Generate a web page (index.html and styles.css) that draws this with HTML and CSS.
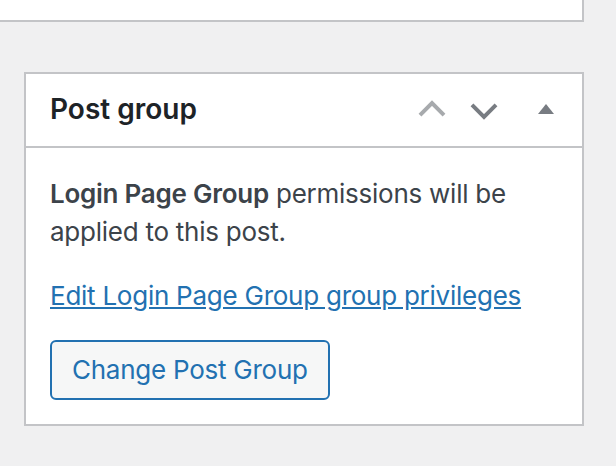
FILE: index.html
```html
<!DOCTYPE html>
<html lang="en">
<head>
<meta charset="utf-8">
<title>Post group</title>
<link rel="stylesheet" href="styles.css">
</head>
<body>
<div class="column">
  <div class="card card-prev"></div>
  <div class="card postbox">
    <div class="postbox-header">
      <h2 class="hndle">Post group</h2>
      <div class="handle-actions">
        <button class="handle-btn order-btn is-disabled" type="button" aria-label="Move up">
          <svg class="icon" viewBox="0 0 20 20" width="40" height="40"><polyline points="4,12.6 10,6.6 16,12.6" fill="none" stroke="currentColor" stroke-width="2"/></svg>
        </button>
        <button class="handle-btn order-btn" type="button" aria-label="Move down">
          <svg class="icon" viewBox="0 0 20 20" width="40" height="40"><polyline points="4,7.4 10,13.4 16,7.4" fill="none" stroke="currentColor" stroke-width="2"/></svg>
        </button>
        <button class="handle-btn toggle-btn" type="button" aria-label="Toggle panel">
          <svg class="icon" viewBox="0 0 20 20" width="40" height="40"><polygon points="6,12 10,7 14,12" fill="currentColor"/></svg>
        </button>
      </div>
    </div>
    <div class="inside">
      <p class="desc"><strong>Login Page Group</strong> permissions will be applied to this post.</p>
      <p class="edit-link"><a href="#">Edit Login Page Group group privileges</a></p>
      <div class="actions">
        <button class="button" type="button">Change Post Group</button>
      </div>
    </div>
  </div>
</div>
</body>
</html>
```

FILE: styles.css
```css
html, body {
  margin: 0;
  padding: 0;
}

body {
  background: #f0f0f1;
  font-family: Inter, "Noto Sans", "Liberation Sans", sans-serif;
  color: #3c434a;
  width: 616px;
  height: 466px;
  overflow: hidden;
}

.column {
  display: flex;
  flex-direction: column;
  padding: 0 32px 0 24px;
}

.card {
  background: #fff;
  border: 2px solid #c3c4c7;
  box-sizing: border-box;
}

.card-prev {
  height: 22px;
  border-top: none;
  margin-left: -40px;
}

.postbox {
  margin-top: 50px;
  height: 354px;
  display: flex;
  flex-direction: column;
}

.postbox-header {
  height: 74px;
  box-sizing: border-box;
  border-bottom: 2px solid #c3c4c7;
  display: flex;
  align-items: center;
  justify-content: space-between;
}

.hndle {
  margin: 0;
  padding-left: 24px;
  font-size: 28px;
  font-weight: 600;
  color: #1d2327;
  line-height: 1.4;
}

.handle-actions {
  display: flex;
  align-self: stretch;
}

.handle-btn {
  border: none;
  background: transparent;
  padding: 0;
  margin: 0;
  display: flex;
  align-items: center;
  justify-content: center;
  color: #787c82;
  cursor: pointer;
}

.order-btn {
  width: 52px;
}

.order-btn.is-disabled {
  color: #a7aaad;
}

.toggle-btn {
  width: 72px;
}

.icon {
  display: block;
}

.inside {
  padding: 0 24px 24px;
  display: flex;
  flex-direction: column;
  align-items: flex-start;
}

.desc {
  margin: 27px 0 0;
  font-size: 26px;
  line-height: 38px;
  letter-spacing: -0.25px;
}

.desc strong {
  font-weight: 600;
}

.edit-link {
  margin: 26px 0 0;
  font-size: 26px;
  line-height: 38px;
  letter-spacing: -0.25px;
}

.edit-link a {
  color: #2271b1;
  text-decoration: underline;
}

.actions {
  margin-top: 25px;
}

.button {
  font-family: inherit;
  font-size: 26px;
  letter-spacing: -0.25px;
  height: 60px;
  padding: 0 20px;
  color: #2271b1;
  background: #f6f7f7;
  border: 2px solid #2271b1;
  border-radius: 6px;
  box-sizing: border-box;
  line-height: 56px;
  cursor: pointer;
}
```
